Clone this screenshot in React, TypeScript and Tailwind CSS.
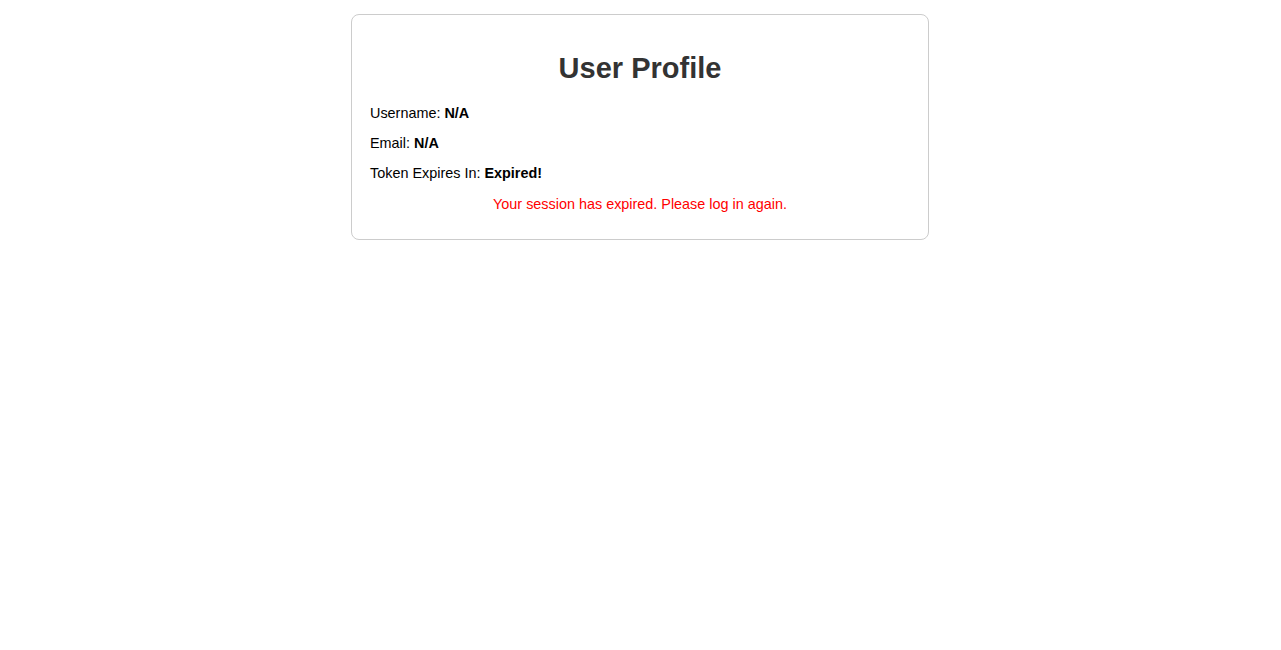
import React from "react";

const App = () => {
  const user = { username: "N/A", email: "N/A" };
  const expired = true;

  return (
    <div className="min-h-screen bg-white font-['Liberation_Sans',Arial,sans-serif] pt-[14px] pr-px">
      <div className="mx-auto w-[578px] border border-[#cccccc] rounded-lg px-[18px] pt-[37px] pb-[25px]">
        <h2 className="text-center text-[29px] leading-[33px] font-bold text-[#333333]">
          User Profile
        </h2>
        <div className="mt-[18px] flex flex-col gap-[10px] text-[14.4px] leading-[20px] text-black">
          <p>
            Username: <strong>{user.username}</strong>
          </p>
          <p>
            Email: <strong>{user.email}</strong>
          </p>
          <p>
            Token Expires In: <strong>{expired ? "Expired!" : "--"}</strong>
          </p>
          {expired && (
            <p className="mt-px text-center text-[#ff0000]">
              Your session has expired. Please log in again.
            </p>
          )}
        </div>
      </div>
    </div>
  );
};

export default App;
